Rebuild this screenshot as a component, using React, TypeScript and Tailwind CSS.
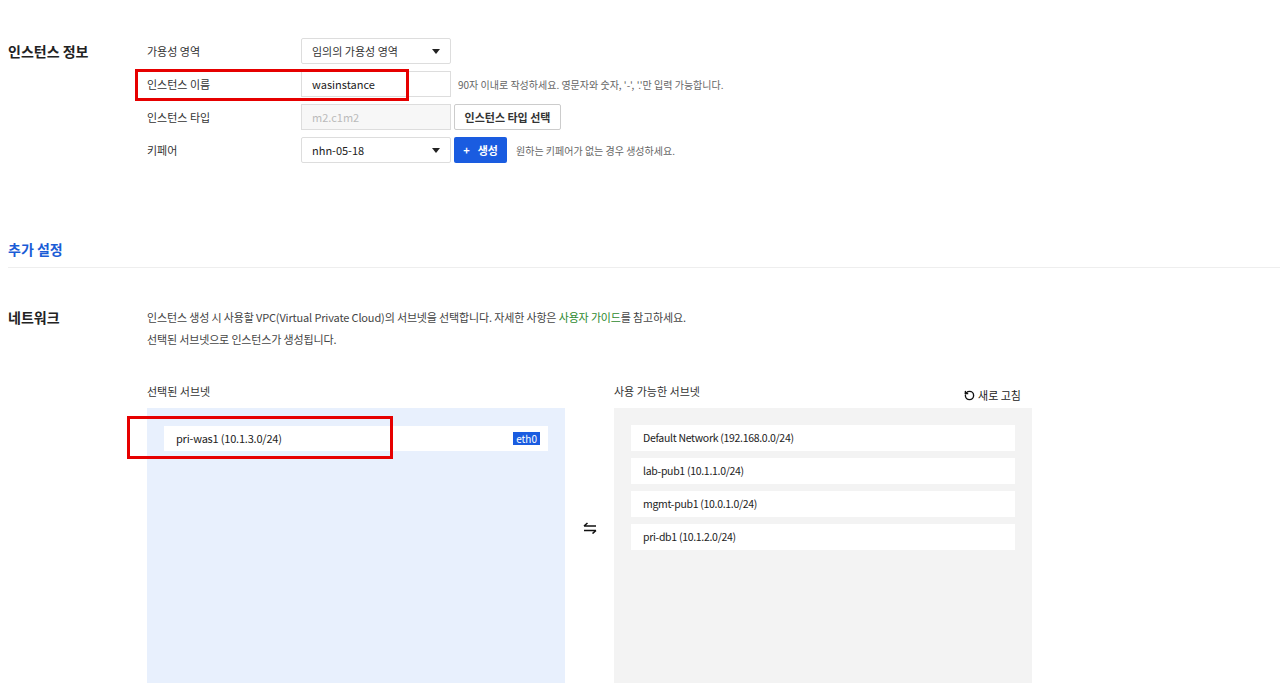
import React from "react";
import { RotateCcw } from "lucide-react";

const font = { fontFamily: '"Noto Sans CJK KR", "Noto Sans", sans-serif' };

function Caret() {
  return (
    <svg width="8" height="5" viewBox="0 0 8 5" className="shrink-0">
      <path d="M0 0 H8 L4 5 Z" fill="#222" />
    </svg>
  );
}

function Row({ label, children }: { label: string; children: React.ReactNode }) {
  return (
    <div className="flex items-center h-[26px]">
      <div className="w-[154px] text-[11px] text-[#333]">{label}</div>
      {children}
    </div>
  );
}

function Swap() {
  return (
    <svg width="14" height="12" viewBox="0 0 14 12">
      <path d="M1 4 H13 M1 4 L4.5 1" stroke="#111" strokeWidth="1.6" fill="none" />
      <path d="M1 8.5 H13 M13 8.5 L9.5 11.5" stroke="#111" strokeWidth="1.6" fill="none" />
    </svg>
  );
}

export default function App() {
  const available = [
    "Default Network (192.168.0.0/24)",
    "lab-pub1 (10.1.1.0/24)",
    "mgmt-pub1 (10.0.1.0/24)",
    "pri-db1 (10.1.2.0/24)",
  ];
  return (
    <div className="relative w-[1280px] h-[683px] overflow-hidden bg-white text-[#333]" style={font}>
      <div className="pl-[8px] pt-[38px]">
        {/* Section 1 */}
        <div className="flex">
          <div className="w-[139px] text-[14px] font-bold text-[#222] leading-[26px]">인스턴스 정보</div>
          <div className="flex flex-col gap-[7px]">
            <Row label="가용성 영역">
              <div className="w-[150px] h-[26px] border border-[#ddd] rounded-[2px] flex items-center justify-between pl-[10px] pr-[10px] text-[11px] text-[#333]">
                <span>임의의 가용성 영역</span>
                <Caret />
              </div>
            </Row>
            <Row label="인스턴스 이름">
              <div className="w-[150px] h-[26px] border border-[#ddd] flex items-center pl-[10px] text-[11px] text-[#222]">
                wasinstance
              </div>
              <span className="ml-[7px] text-[10px] text-[#666]">
                90자 이내로 작성하세요. 영문자와 숫자, '-', '.'만 입력 가능합니다.
              </span>
            </Row>
            <Row label="인스턴스 타입">
              <div className="w-[150px] h-[26px] border border-[#ddd] bg-[#f7f7f7] flex items-center pl-[10px] text-[11px] text-[#bbb]">
                m2.c1m2
              </div>
              <div className="ml-[3px] h-[26px] w-[107px] border border-[#ccc] rounded-[2px] bg-white flex items-center justify-center text-[11px] font-bold text-[#333]">
                인스턴스 타입 선택
              </div>
            </Row>
            <Row label="키페어">
              <div className="w-[150px] h-[26px] border border-[#ddd] rounded-[2px] flex items-center justify-between pl-[10px] pr-[10px] text-[11px] text-[#222]">
                <span>nhn-05-18</span>
                <Caret />
              </div>
              <div className="ml-[3px] h-[26px] w-[53px] rounded-[2px] bg-[#1a5ce0] flex items-center justify-center gap-[8px] text-[11px] font-bold text-white">
                <span>+</span>
                <span>생성</span>
              </div>
              <span className="ml-[9px] text-[10px] text-[#666]">원하는 키페어가 없는 경우 생성하세요.</span>
            </Row>
          </div>
        </div>

        {/* Section 2 */}
        <div className="mt-[76px] pb-[8px] border-b border-[#eee] text-[14px] font-bold text-[#1a5cd6] leading-[20px]">
          추가 설정
        </div>

        {/* Network */}
        <div className="mt-[38px] flex">
          <div className="w-[139px] text-[14px] font-bold text-[#222] leading-[22px]">네트워크</div>
          <div className="flex flex-col">
            <div className="text-[11px] leading-[22px] tracking-[-0.15px] text-[#444]">
              인스턴스 생성 시 사용할 VPC(Virtual Private Cloud)의 서브넷을 선택합니다. 자세한 사항은{" "}
              <span className="text-[#2e8a2e]">사용자 가이드</span>를 참고하세요.
            </div>
            <div className="text-[11px] leading-[22px] tracking-[-0.15px] text-[#444]">선택된 서브넷으로 인스턴스가 생성됩니다.</div>

            <div className="mt-[31px] flex">
              {/* Selected */}
              <div className="w-[418px] flex flex-col">
                <div className="h-[27px] text-[11px] leading-[20px] text-[#333]">선택된 서브넷</div>
                <div className="h-[300px] bg-[#e8f0fd] pt-[18px] px-[17px]">
                  <div className="h-[25px] bg-white flex items-center justify-between pl-[12px] pr-[8px] text-[11px] tracking-[-0.2px] text-[#222]">
                    <span>pri-was1 (10.1.3.0/24)</span>
                    <span className="bg-[#1a5ce0] text-white text-[10px] tracking-normal leading-[13px] px-[3px]">eth0</span>
                  </div>
                </div>
              </div>
              {/* swap */}
              <div className="w-[49px] flex items-start justify-center pt-[141px]">
                <Swap />
              </div>
              {/* Available */}
              <div className="w-[418px] flex flex-col">
                <div className="h-[27px] flex justify-between text-[11px] leading-[20px] text-[#333]">
                  <span>사용 가능한 서브넷</span>
                  <span className="flex items-center gap-[3px] mr-[11px] mt-[1px] text-[#222]">
                    <RotateCcw size={11} strokeWidth={3} color="#111" />
                    새로 고침
                  </span>
                </div>
                <div className="h-[300px] bg-[#f3f3f3] pt-[17px] px-[17px] flex flex-col gap-[7px]">
                  {available.map((s) => (
                    <div key={s} className="h-[26px] bg-white flex items-center pl-[12px] text-[10.5px] tracking-[-0.3px] text-[#222]">
                      {s}
                    </div>
                  ))}
                </div>
              </div>
            </div>
          </div>
        </div>
      </div>

      {/* Annotation boxes */}
      <div className="absolute left-[135px] top-[69px] w-[274px] h-[32px] border-[3px] border-[#e60000]" />
      <div className="absolute left-[127px] top-[416px] w-[266px] h-[43px] border-[3px] border-[#e60000]" />
    </div>
  );
}
